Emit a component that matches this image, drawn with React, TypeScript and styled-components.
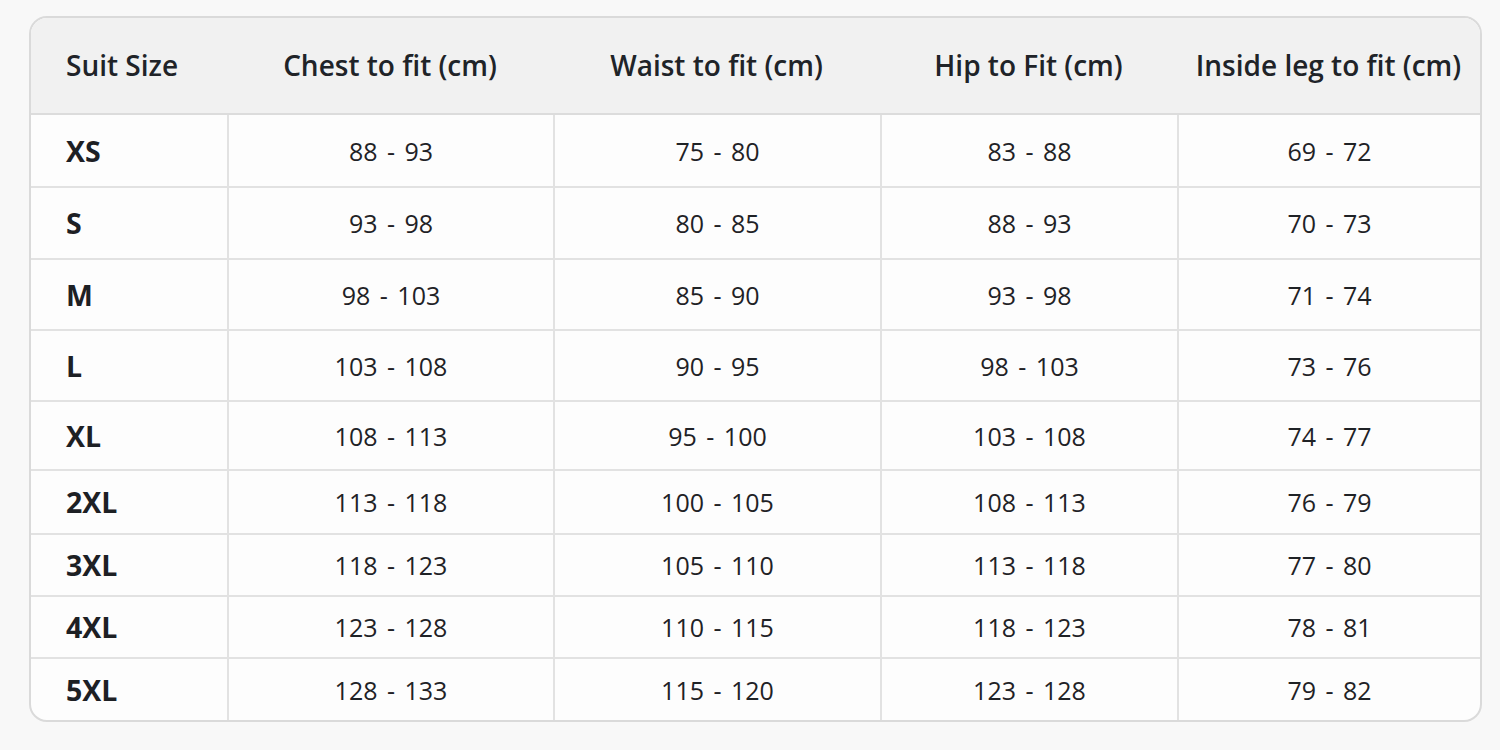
import styled, { createGlobalStyle } from "styled-components";

const GlobalStyle = createGlobalStyle`
  html, body {
    margin: 0;
    padding: 0;
    background: #f8f8f8;
  }
  body {
    font-family: "Open Sans", "Noto Sans", "Liberation Sans", sans-serif;
    color: #1f2226;
  }
`;

const COLS = "196px 326px 327px 297px 1fr";

const Page = styled.div`
  width: 1500px;
  height: 750px;
  padding: 16px 18px 0 29px;
  box-sizing: border-box;
`;

const Card = styled.div`
  width: 1453px;
  border: 2px solid #dadada;
  border-radius: 18px;
  background: #fdfdfd;
  overflow: hidden;
  box-sizing: border-box;
`;

const HeaderRow = styled.div`
  display: grid;
  grid-template-columns: ${COLS};
  height: 95px;
  background: #f1f1f1;
  border-bottom: 2px solid #dcdcdc;
`;

const HeadCell = styled.div<{ $left?: boolean }>`
  display: flex;
  align-items: center;
  justify-content: ${(p) => (p.$left ? "flex-start" : "center")};
  padding-left: ${(p) => (p.$left ? "35px" : "0")};
  padding-bottom: 2px;
  font-size: 28px;
  font-weight: 600;
  color: #202328;
  white-space: nowrap;
`;

const Row = styled.div<{ $h: number; $last?: boolean }>`
  display: grid;
  grid-template-columns: ${COLS};
  height: ${(p) => p.$h}px;
  border-bottom: ${(p) => (p.$last ? "none" : "2px solid #e2e2e2")};
  box-sizing: border-box;
`;

const SizeCell = styled.div`
  display: flex;
  align-items: center;
  padding-left: 35px;
  font-size: 28.5px;
  font-weight: 700;
  color: #1d2024;
`;

const ValueCell = styled.div`
  display: flex;
  align-items: center;
  justify-content: center;
  border-left: 2px solid #e2e2e2;
  font-size: 25px;
  font-weight: 400;
  word-spacing: 3px;
  color: #1f2226;
  white-space: nowrap;
`;

const headers = [
  "Chest to fit (cm)",
  "Waist to fit (cm)",
  "Hip to Fit (cm)",
  "Inside leg to fit (cm)",
];

const rows: { size: string; h: number; values: string[] }[] = [
  { size: "XS", h: 73, values: ["88 - 93", "75 - 80", "83 - 88", "69 - 72"] },
  { size: "S", h: 72, values: ["93 - 98", "80 - 85", "88 - 93", "70 - 73"] },
  { size: "M", h: 71, values: ["98 - 103", "85 - 90", "93 - 98", "71 - 74"] },
  { size: "L", h: 71, values: ["103 - 108", "90 - 95", "98 - 103", "73 - 76"] },
  { size: "XL", h: 69, values: ["108 - 113", "95 - 100", "103 - 108", "74 - 77"] },
  { size: "2XL", h: 64, values: ["113 - 118", "100 - 105", "108 - 113", "76 - 79"] },
  { size: "3XL", h: 62, values: ["118 - 123", "105 - 110", "113 - 118", "77 - 80"] },
  { size: "4XL", h: 62, values: ["123 - 128", "110 - 115", "118 - 123", "78 - 81"] },
  { size: "5XL", h: 61, values: ["128 - 133", "115 - 120", "123 - 128", "79 - 82"] },
];

const App = () => {
  return (
    <>
      <GlobalStyle />
      <Page>
        <Card>
          <HeaderRow>
            <HeadCell $left>Suit Size</HeadCell>
            {headers.map((h) => (
              <HeadCell key={h}>{h}</HeadCell>
            ))}
          </HeaderRow>
          {rows.map((r, i) => (
            <Row key={r.size} $h={r.h} $last={i === rows.length - 1}>
              <SizeCell>{r.size}</SizeCell>
              {r.values.map((v, j) => (
                <ValueCell key={j}>{v}</ValueCell>
              ))}
            </Row>
          ))}
        </Card>
      </Page>
    </>
  );
};

export default App;
